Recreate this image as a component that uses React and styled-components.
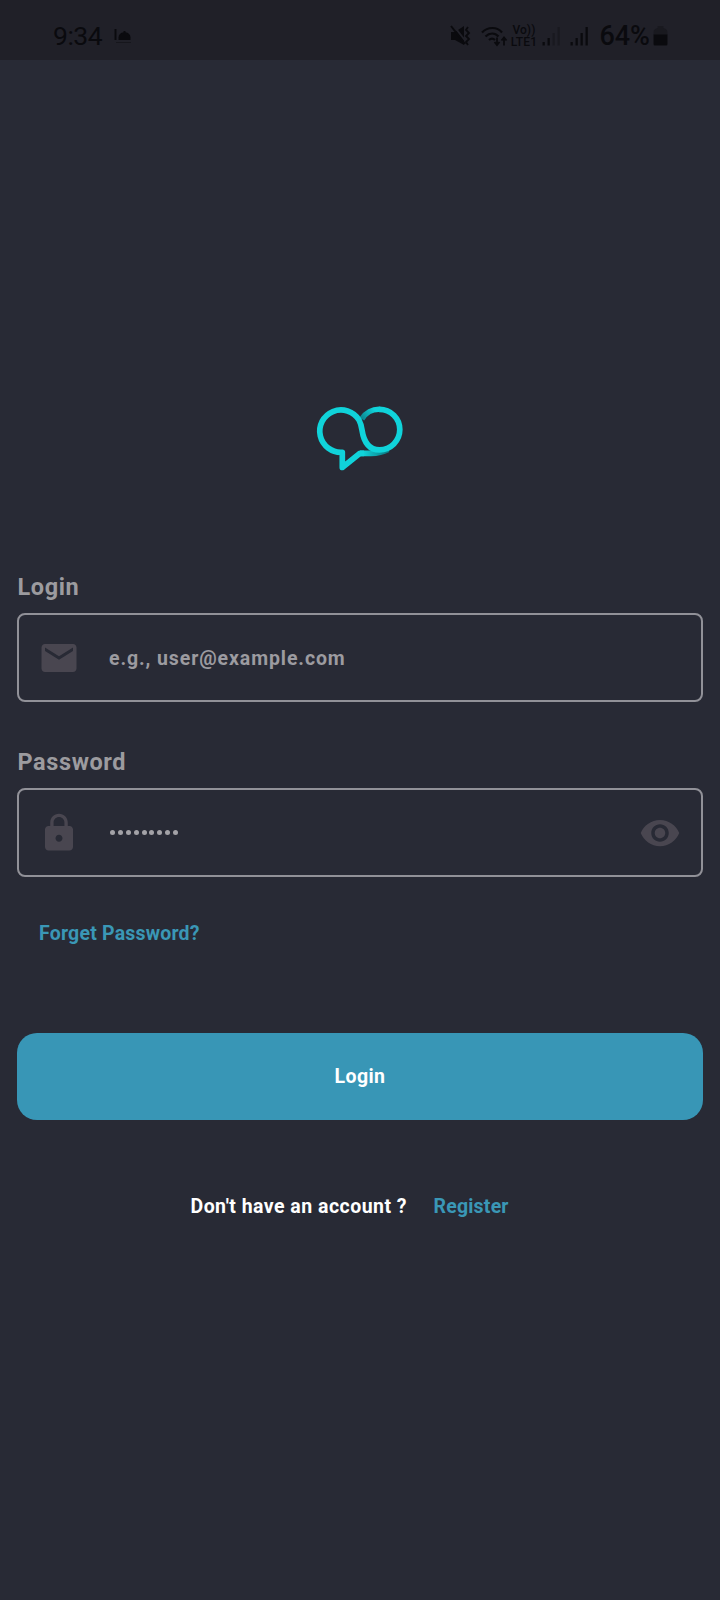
import React from "react";
import styled, { createGlobalStyle } from "styled-components";

const GlobalStyle = createGlobalStyle`
  * { box-sizing: border-box; }
  body { margin: 0; background: #282a35; font-family: Roboto, sans-serif; }
`;

const Screen = styled.div`
  width: 720px;
  height: 1600px;
  background: #282a35;
  overflow: hidden;
  display: flex;
  flex-direction: column;
`;

const StatusBar = styled.header`
  height: 60px;
  flex: none;
  background: #202028;
  color: #0a0a0e;
  display: flex;
  justify-content: space-between;
  align-items: center;
  padding: 11px 52px 0 53px;
`;

const StatusGroup = styled.div`
  display: flex;
  align-items: center;
`;

const StatusText = styled.span`
  font-size: ${(p) => p.$size}px;
  font-weight: ${(p) => p.$weight || 500};
  line-height: 30px;
  letter-spacing: ${(p) => p.$spacing || 0}px;
  margin-right: ${(p) => p.$gap || 0}px;
`;

const StatusIcon = styled.svg`
  display: block;
  flex: none;
  margin-right: ${(p) => p.$gap || 0}px;
`;

const Volte = styled.span`
  display: flex;
  flex-direction: column;
  align-items: center;
  width: 27px;
  font-size: 12px;
  font-weight: 500;
  line-height: 12px;
  letter-spacing: 0.1px;
  margin-right: 5px;
  white-space: nowrap;
`;

const VolteLine = styled.span`
  display: block;
  height: 12px;
`;

const Main = styled.main`
  padding: 344px 17px 0;
  display: flex;
  flex-direction: column;
`;

const Logo = styled.svg`
  display: block;
  align-self: center;
  margin-bottom: 101px;
`;

const Label = styled.label`
  display: block;
  height: 40px;
  line-height: 28px;
  padding-left: 0.5px;
  font-size: 23.5px;
  font-weight: 700;
  letter-spacing: 0.6px;
  color: #9c9b9f;
`;

const Field = styled.div`
  height: 89px;
  margin-bottom: 46px;
  border: 2px solid #919198;
  border-radius: 8px;
  display: flex;
  align-items: center;
  padding: 0 20px 0 19.4px;
`;

const FieldIcon = styled.svg`
  display: block;
  width: 42px;
  height: 42px;
  flex: none;
  fill: #494650;
`;

const Placeholder = styled.span`
  flex: 1;
  margin-left: 28.6px;
  padding-top: 2px;
  font-size: 19.5px;
  font-weight: 700;
  letter-spacing: 0.9px;
  line-height: 24px;
  color: #9c9ba0;
`;

const Dots = styled.span`
  flex: 1;
  display: flex;
  gap: 2.9px;
  margin-left: 29.6px;
`;

const Dot = styled.i`
  width: 5px;
  height: 5px;
  border-radius: 50%;
  background: #a3a2a7;
`;

const TextLink = styled.a`
  font-size: 19.5px;
  font-weight: 700;
  letter-spacing: 0.2px;
  line-height: 24px;
  color: #3a97b6;
`;

const ForgetRow = styled.div`
  height: 110.5px;
  padding-left: 22px;
  margin-top: -1px;
  display: flex;
  align-items: flex-start;
`;

const LoginButton = styled.button`
  height: 87.5px;
  padding: 2px 0 0;
  border: 0;
  border-radius: 20px;
  background: #3896b6;
  color: #fff;
  font: 700 19.5px/24px Roboto, sans-serif;
  letter-spacing: 0.4px;
`;

const RegisterRow = styled.div`
  display: flex;
  gap: 26.5px;
  margin-top: 75px;
  padding-left: 173.5px;
`;

const Question = styled.span`
  font-size: 19.5px;
  font-weight: 700;
  line-height: 24px;
  letter-spacing: 0.47px;
  color: #fff;
`;

const Bars = ({ gap, dim }) => (
  <StatusIcon $gap={gap} width="19" height="22" viewBox="0 0 19 22" fill="currentColor">
    <rect x="0.5" y="17" width="2.3" height="3.500" />
    <rect x="5.500" y="13" width="2.3" height="7.500" />
    <rect x="10.500" y="8" width="2.3" height="12.500" opacity={dim ? 0.3 : 1} />
    <rect x="15.500" y="2" width="2.3" height="18.500" opacity={dim ? 0.3 : 1} />
  </StatusIcon>
);

export default function App() {
  return (
    <>
      <GlobalStyle />
      <Screen>
        <StatusBar>
          <StatusGroup>
            <StatusText $size={26.5} $weight={400} $spacing={-0.5} $gap={12}>9:34</StatusText>
            <StatusIcon width="18" height="18" viewBox="0 0 18 18" fill="currentColor">
              <path d="M0.5 2h2v11h-2zM4.5 13v-2.5c0-3 2.2-4.8 5-5.2V4h2v1.3c3 .5 5 2.3 5 5.2V13z" />
              <path d="M2 15h15v1H2z" opacity=".45" />
            </StatusIcon>
          </StatusGroup>
          <StatusGroup>
            <StatusIcon $gap={10} width="21" height="22" viewBox="0 0 21 22" fill="currentColor">
              <path d="M1 7h4L14 1v19L5 15H1z" />
              <path d="M3 0l14 18" stroke="#202028" strokeWidth="2" />
              <path d="M1 1l14 18" stroke="currentColor" strokeWidth="2" />
              <path d="M18 2l-2 3 3 3-3 3 3 3-3 3 2 3" fill="none" stroke="currentColor" strokeWidth="1.8" />
            </StatusIcon>
            <StatusIcon $gap={2} width="27" height="22" viewBox="0 0 27 22" fill="none" stroke="currentColor" strokeWidth="2.2">
              <path d="M1 7.500c5.800-6 15.200-6 20 0M4.500 11.500c4-4 9.500-4 13 0M8 15c2-1.800 4-1.800 6 0" />
              <path d="M16 12.500v7M13.500 17l2.500 3 2.500-3M23 20.500v-8M20.500 15.500l2.500-3 2.500 3" strokeWidth="1.8" />
            </StatusIcon>
            <Volte>
              <VolteLine>Vo))</VolteLine>
              <VolteLine>LTE1</VolteLine>
            </Volte>
            <Bars gap={9} dim />
            <Bars gap={10} />
            <StatusText $size={27} $spacing={0} $gap={3}>64%</StatusText>
            <StatusIcon width="15" height="22" viewBox="0 0 15 22" fill="currentColor">
              <path d="M4.500 1h6v2q4 1 4 4v3H.500V7q0-3 4-4z" opacity=".3" />
              <path d="M.5 9.500h14V19q0 1.500-1.500 1.500H2Q.5 20.500.5 19z" />
            </StatusIcon>
          </StatusGroup>
        </StatusBar>
        <Main>
          <Logo width="90" height="68" viewBox="315 404 90 68" fill="none" strokeWidth="5.700">
            <defs>
              <linearGradient id="topFade" x1="361" y1="420" x2="374" y2="409" gradientUnits="userSpaceOnUse">
                <stop stopColor="#0c7f88" />
                <stop offset="1" stopColor="#10d3da" />
              </linearGradient>
              <linearGradient id="bottomFade" x1="363" y1="0" x2="386" y2="0" gradientUnits="userSpaceOnUse">
                <stop stopColor="#10d3da" />
                <stop offset="1" stopColor="#0c7f88" />
              </linearGradient>
            </defs>
            <path d="M361.800 419A20.200 20.200 0 0 1 380 409.300" stroke="url(#topFade)" />
            <path d="M360 453.300H371Q381 453.300 388 449.500" stroke="url(#bottomFade)" />
            <path
              d="M379.500 409.300A20.300 20.300 0 1 1 379.500 449.900C368 449.900 363.500 440 362 430C361.500 426.500 360.600 423 359 420A21.200 21.200 0 1 0 342.300 452.300V467.500L360 453.300H364"
              stroke="#10d3da"
              strokeLinejoin="round"
            />
          </Logo>
          <Label>Login</Label>
          <Field>
            <FieldIcon viewBox="0 0 24 24">
              <path d="M20 4H4c-1.100 0-1.990.9-1.990 2L2 18c0 1.100.9 2 2 2h16c1.100 0 2-.9 2-2V6c0-1.100-.9-2-2-2zm0 4l-8 5-8-5V6l8 5 8-5v2z" />
            </FieldIcon>
            <Placeholder>e.g., user@example.com</Placeholder>
          </Field>
          <Label>Password</Label>
          <Field>
            <FieldIcon viewBox="0 0 24 24">
              <path d="M18 8h-1V6c0-2.760-2.240-5-5-5S7 3.240 7 6v2H6c-1.100 0-2 .9-2 2v10c0 1.100.9 2 2 2h12c1.100 0 2-.9 2-2V10c0-1.100-.9-2-2-2zm-6 9c-1.100 0-2-.9-2-2s.9-2 2-2 2 .9 2 2-.9 2-2 2zm3.100-9H8.900V6c0-1.710 1.390-3.100 3.100-3.100s3.100 1.390 3.100 3.100v2z" />
            </FieldIcon>
            <Dots>
              {Array.from({ length: 9 }, (_, i) => (
                <Dot key={i} />
              ))}
            </Dots>
            <FieldIcon viewBox="0 0 24 24">
              <path d="M12 4.500C7 4.500 2.730 7.610 1 12c1.730 4.390 6 7.500 11 7.500s9.270-3.110 11-7.500c-1.730-4.390-6-7.500-11-7.500zM12 17c-2.760 0-5-2.240-5-5s2.240-5 5-5 5 2.240 5 5-2.240 5-5 5zm0-8c-1.660 0-3 1.340-3 3s1.340 3 3 3 3-1.340 3-3-1.340-3-3-3z" />
            </FieldIcon>
          </Field>
          <ForgetRow>
            <TextLink>Forget Password?</TextLink>
          </ForgetRow>
          <LoginButton>Login</LoginButton>
          <RegisterRow>
            <Question>Don't have an account ?</Question>
            <TextLink>Register</TextLink>
          </RegisterRow>
        </Main>
      </Screen>
    </>
  );
}
